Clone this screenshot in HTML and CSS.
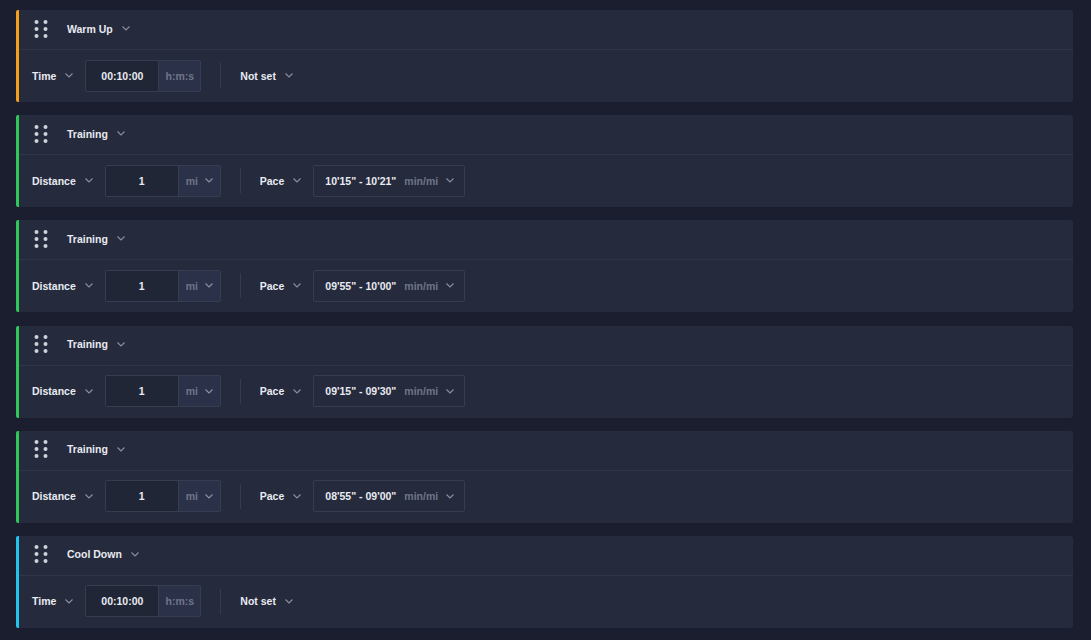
FILE: index.html
```html
<!DOCTYPE html>
<html>
<head>
<meta charset="utf-8">
<link rel="stylesheet" href="styles.css">
</head>
<body>
<svg width="0" height="0" style="position:absolute">
  <defs>
    <symbol id="chev" viewBox="0 0 8 5"><path d="M0.5 0.5 L4 4 L7.5 0.5" fill="none" stroke="currentColor" stroke-width="1.1"/></symbol>
    <symbol id="dots" viewBox="0 0 14 18"><circle cx="2.5" cy="2" r="2"/><circle cx="11.5" cy="2" r="2"/><circle cx="2.5" cy="9" r="2"/><circle cx="11.5" cy="9" r="2"/><circle cx="2.5" cy="16" r="2"/><circle cx="11.5" cy="16" r="2"/></symbol>
  </defs>
</svg>
<div class="list">
  <div class="card warm">
    <div class="head"><svg class="dots"><use href="#dots"/></svg><span class="title">Warm Up</span><svg class="chev"><use href="#chev"/></svg></div>
    <div class="body">
      <span class="label">Time</span><svg class="chev"><use href="#chev"/></svg>
      <div class="field"><span class="num">00:10:00</span><span class="unit">h:m:s</span></div>
      <span class="divider"></span>
      <span class="label">Not set</span><svg class="chev"><use href="#chev"/></svg>
    </div>
  </div>
  <div class="card train">
    <div class="head"><svg class="dots"><use href="#dots"/></svg><span class="title">Training</span><svg class="chev"><use href="#chev"/></svg></div>
    <div class="body">
      <span class="label">Distance</span><svg class="chev"><use href="#chev"/></svg>
      <div class="field"><span class="num">1</span><span class="unit">mi<svg class="chev"><use href="#chev"/></svg></span></div>
      <span class="divider"></span>
      <span class="label">Pace</span><svg class="chev"><use href="#chev"/></svg>
      <div class="pace"><span class="range">10'15" - 10'21"</span><span class="pu">min/mi</span><svg class="chev"><use href="#chev"/></svg></div>
    </div>
  </div>
  <div class="card train">
    <div class="head"><svg class="dots"><use href="#dots"/></svg><span class="title">Training</span><svg class="chev"><use href="#chev"/></svg></div>
    <div class="body">
      <span class="label">Distance</span><svg class="chev"><use href="#chev"/></svg>
      <div class="field"><span class="num">1</span><span class="unit">mi<svg class="chev"><use href="#chev"/></svg></span></div>
      <span class="divider"></span>
      <span class="label">Pace</span><svg class="chev"><use href="#chev"/></svg>
      <div class="pace"><span class="range">09'55" - 10'00"</span><span class="pu">min/mi</span><svg class="chev"><use href="#chev"/></svg></div>
    </div>
  </div>
  <div class="card train">
    <div class="head"><svg class="dots"><use href="#dots"/></svg><span class="title">Training</span><svg class="chev"><use href="#chev"/></svg></div>
    <div class="body">
      <span class="label">Distance</span><svg class="chev"><use href="#chev"/></svg>
      <div class="field"><span class="num">1</span><span class="unit">mi<svg class="chev"><use href="#chev"/></svg></span></div>
      <span class="divider"></span>
      <span class="label">Pace</span><svg class="chev"><use href="#chev"/></svg>
      <div class="pace"><span class="range">09'15" - 09'30"</span><span class="pu">min/mi</span><svg class="chev"><use href="#chev"/></svg></div>
    </div>
  </div>
  <div class="card train">
    <div class="head"><svg class="dots"><use href="#dots"/></svg><span class="title">Training</span><svg class="chev"><use href="#chev"/></svg></div>
    <div class="body">
      <span class="label">Distance</span><svg class="chev"><use href="#chev"/></svg>
      <div class="field"><span class="num">1</span><span class="unit">mi<svg class="chev"><use href="#chev"/></svg></span></div>
      <span class="divider"></span>
      <span class="label">Pace</span><svg class="chev"><use href="#chev"/></svg>
      <div class="pace"><span class="range">08'55" - 09'00"</span><span class="pu">min/mi</span><svg class="chev"><use href="#chev"/></svg></div>
    </div>
  </div>
  <div class="card cool">
    <div class="head"><svg class="dots"><use href="#dots"/></svg><span class="title">Cool Down</span><svg class="chev"><use href="#chev"/></svg></div>
    <div class="body">
      <span class="label">Time</span><svg class="chev"><use href="#chev"/></svg>
      <div class="field"><span class="num">00:10:00</span><span class="unit">h:m:s</span></div>
      <span class="divider"></span>
      <span class="label">Not set</span><svg class="chev"><use href="#chev"/></svg>
    </div>
  </div>
</div>
</body>
</html>
```
FILE: styles.css
```css
html, body {
  margin: 0;
  padding: 0;
  background: #1a1e2f;
  font-family: "Liberation Sans", Arial, sans-serif;
  font-size: 10.5px;
  font-weight: bold;
  color: #e9ebf1;
}
.list {
  display: flex;
  flex-direction: column;
  gap: 13.2px;
  padding: 10px 18px 0 16px;
}
.card {
  height: 92px;
  box-sizing: border-box;
  background: #252a3d;
  border-left: 3px solid #f5a01a;
  border-radius: 2px 3px 3px 2px;
  display: flex;
  flex-direction: column;
}
.card.train { border-left-color: #2fc75a; }
.card.cool { border-left-color: #22c4ee; }
.head {
  height: 40px;
  flex: none;
  box-sizing: border-box;
  display: flex;
  align-items: center;
  padding: 0 0 2px 15px;
  border-bottom: 1px solid #30364a;
}
.dots {
  width: 14px;
  height: 18px;
  fill: #cfd2da;
  margin-right: 19px;
}
.chev {
  width: 8px;
  height: 5px;
  color: #8b91a1;
  flex: none;
}
.title { margin-right: 9px; }
.body {
  flex: 1;
  display: flex;
  align-items: center;
  padding: 0 0 1px 13px;
}
.label { margin-right: 9px; }
.body > .chev { margin-right: 12px; }
.field {
  display: flex;
  height: 32px;
  box-sizing: border-box;
  border: 1px solid #373d51;
  border-radius: 2px;
  overflow: hidden;
}
.num {
  width: 72px;
  display: flex;
  align-items: center;
  justify-content: center;
  background: #212637;
  border-right: 1px solid #373d51;
}
.unit {
  width: 41px;
  display: flex;
  align-items: center;
  justify-content: center;
  gap: 7px;
  background: #2b3148;
  color: #6f7589;
}
.divider {
  width: 1px;
  height: 25px;
  background: #363c50;
  margin: 0 19px 0 19px;
}
.pace {
  width: 152px;
  height: 32px;
  box-sizing: border-box;
  border: 1px solid #373d51;
  border-radius: 2px;
  display: flex;
  align-items: center;
  padding: 0 10px 0 11px;
}
.range { margin-right: 8px; }
.pu { color: #6f7589; }
.pace .chev { margin-left: auto; }
```
